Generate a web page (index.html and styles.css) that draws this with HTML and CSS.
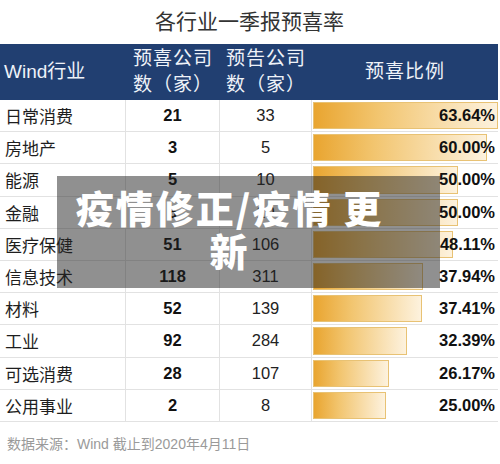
FILE: index.html
```html
<!DOCTYPE html>
<html>
<head>
  <meta charset="UTF-8" />
  <link rel="stylesheet" href="styles.css">
</head>
<body>
  <div class="page">
    <h1 class="title">各行业一季报预喜率</h1>

    <div class="table">
      <div class="th th-left">Wind行业</div>
      <div class="th">预喜公司<br>数（家）</div>
      <div class="th">预告公司<br>数（家）</div>
      <div class="th">预喜比例</div>

      <div class="td name">日常消费</div><div class="td num">21</div><div class="td cnt">33</div>
      <div class="td ratio"><div class="bar" style="width: 99.5%"></div><span class="pct">63.64%</span></div>

      <div class="td name">房地产</div><div class="td num">3</div><div class="td cnt">5</div>
      <div class="td ratio"><div class="bar" style="width: 93.8%"></div><span class="pct">60.00%</span></div>

      <div class="td name">能源</div><div class="td num">5</div><div class="td cnt">10</div>
      <div class="td ratio"><div class="bar" style="width: 78.2%"></div><span class="pct">50.00%</span></div>

      <div class="td name">金融</div><div class="td num">5</div><div class="td cnt">10</div>
      <div class="td ratio"><div class="bar" style="width: 78.2%"></div><span class="pct">50.00%</span></div>

      <div class="td name">医疗保健</div><div class="td num">51</div><div class="td cnt">106</div>
      <div class="td ratio"><div class="bar" style="width: 75.2%"></div><span class="pct">48.11%</span></div>

      <div class="td name">信息技术</div><div class="td num">118</div><div class="td cnt">311</div>
      <div class="td ratio"><div class="bar" style="width: 59.3%"></div><span class="pct">37.94%</span></div>

      <div class="td name">材料</div><div class="td num">52</div><div class="td cnt">139</div>
      <div class="td ratio"><div class="bar" style="width: 58.5%"></div><span class="pct">37.41%</span></div>

      <div class="td name">工业</div><div class="td num">92</div><div class="td cnt">284</div>
      <div class="td ratio"><div class="bar" style="width: 50.6%"></div><span class="pct">32.39%</span></div>

      <div class="td name">可选消费</div><div class="td num">28</div><div class="td cnt">107</div>
      <div class="td ratio"><div class="bar" style="width: 40.9%"></div><span class="pct">26.17%</span></div>

      <div class="td name">公用事业</div><div class="td num">2</div><div class="td cnt">8</div>
      <div class="td ratio"><div class="bar" style="width: 39.1%"></div><span class="pct">25.00%</span></div>
    </div>

    <div class="source">数据来源：Wind 截止到2020年4月11日</div>

    <div class="caption">疫情修正/疫情 更新</div>
  </div>
</body>
</html>
```

FILE: styles.css
```css
* { box-sizing: border-box; }
body {
  margin: 0;
  background: #ffffff;
  font-family: "Liberation Sans", "Noto Sans CJK SC", sans-serif;
  color: #222;
}
.page {
  position: relative;
  width: 500px;
  height: 464px;
  overflow: hidden;
}
.title {
  margin: 0;
  height: 44px;
  line-height: 44px;
  text-align: center;
  font-size: 21px;
  font-weight: 400;
  color: #333;
  padding-right: 1px;
}
.table {
  width: 498px;
  display: grid;
  grid-template-columns: 126px 94px 92px 186px;
  grid-template-rows: 56px;
  grid-auto-rows: 32.2px;
}
.th {
  background: #213f71;
  color: #eef2f8;
  font-size: 19px;
  line-height: 26px;
  display: flex;
  align-items: center;
  justify-content: center;
  text-align: center;
  letter-spacing: 1px;
}
.th-left {
  justify-content: flex-start;
  padding-left: 4px;
  letter-spacing: 0;
}
.td {
  border-bottom: 1px solid #e2e2e2;
  border-right: 1px solid #e2e2e2;
  display: flex;
  align-items: center;
  font-size: 16.5px;
}
.name {
  padding-left: 5px;
  font-size: 17px;
  color: #1e1e1e;
}
.num {
  justify-content: center;
  font-weight: 700;
  color: #111;
}
.cnt {
  justify-content: center;
  color: #222;
}
.ratio {
  border-right: none;
  display: grid;
  align-items: stretch;
}
.bar {
  grid-area: 1 / 1;
  margin: 2px 0 2px 1px;
  background: linear-gradient(to right, #e9a530, #f2c56f 35%, #fdf2de);
  border: 1px solid #e8c274;
}
.pct {
  grid-area: 1 / 1;
  justify-self: end;
  align-self: center;
  padding-right: 3px;
  font-weight: 700;
  font-size: 16.5px;
  color: #111;
}
.source {
  padding: 11px 0 0 7px;
  font-size: 14px;
  color: #9a9a9a;
}
.caption {
  position: absolute;
  left: 57px;
  top: 176px;
  width: 383px;
  height: 112px;
  padding: 9px 53px 0 15px;
  background: rgba(34, 34, 34, 0.5);
  color: #ffffff;
  font-family: "Noto Sans CJK SC", sans-serif;
  font-size: 38px;
  font-weight: 900;
  letter-spacing: 2px;
  line-height: 43px;
  text-align: center;
}
```
